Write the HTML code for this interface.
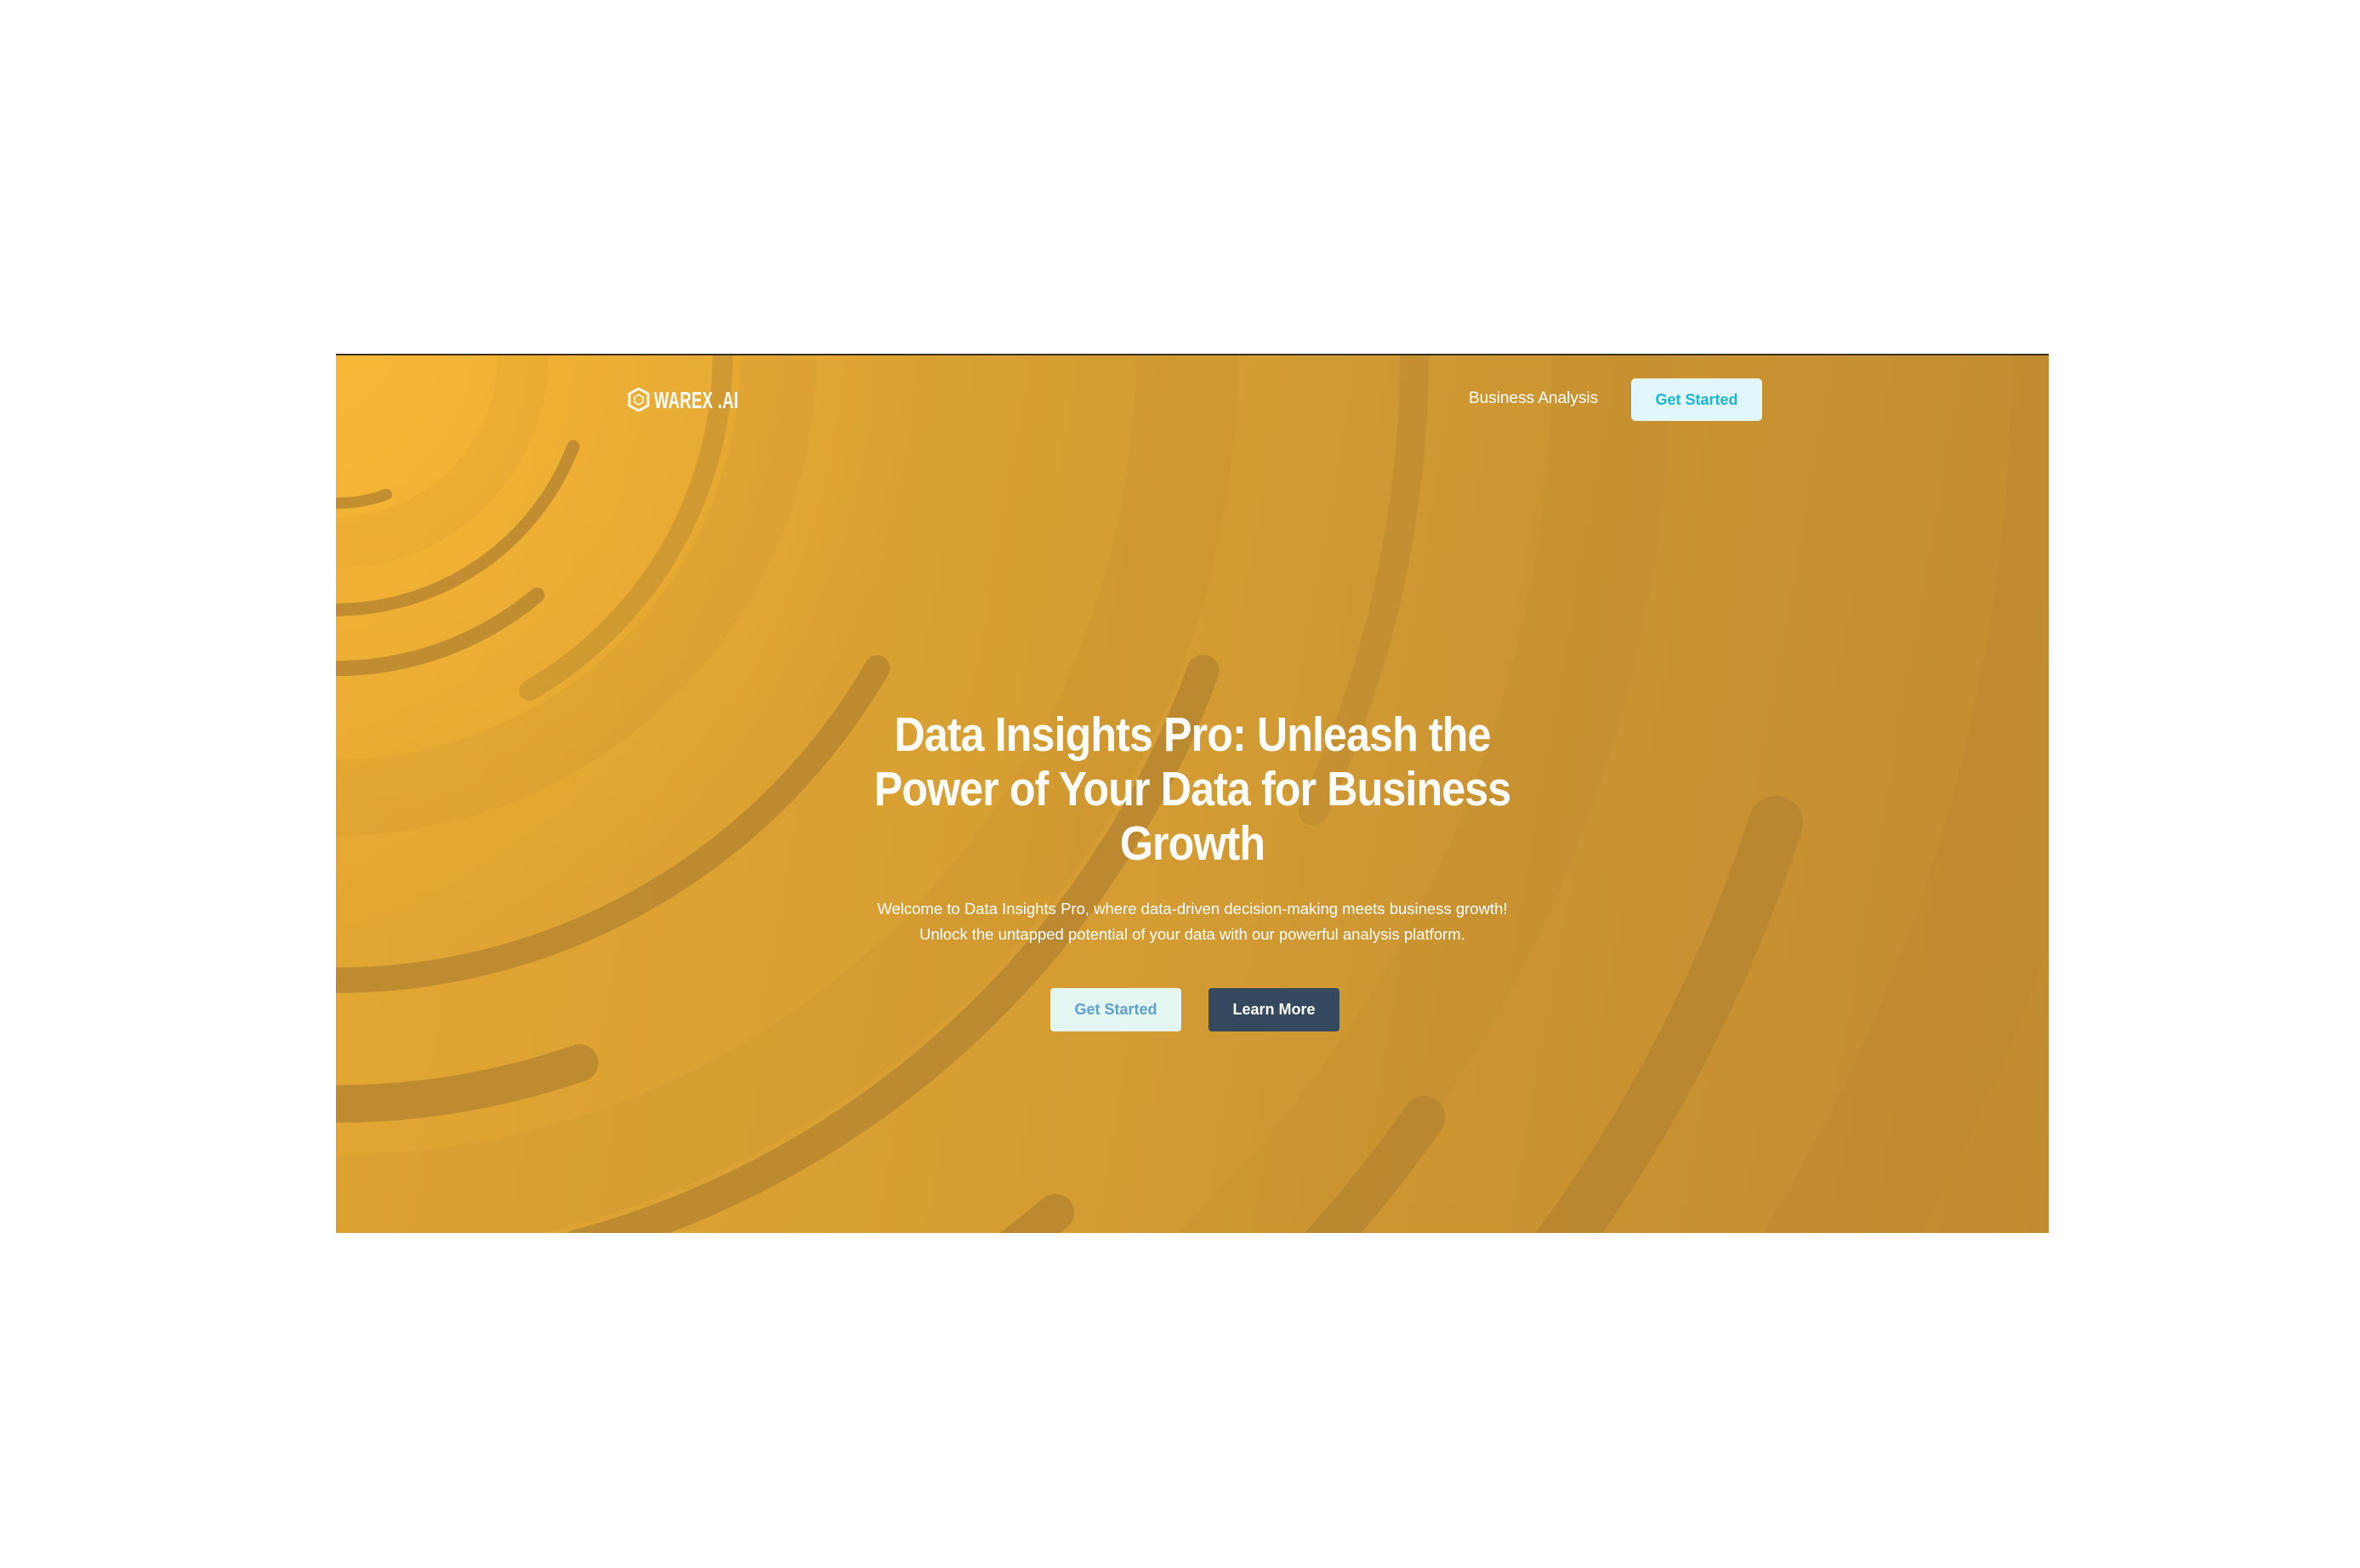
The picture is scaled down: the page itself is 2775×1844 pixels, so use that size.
<!DOCTYPE html>
<html><head><meta charset="utf-8">
<style>
html,body{margin:0;padding:0;background:#fff;width:2775px;height:1844px;overflow:hidden;font-family:"Liberation Sans",Arial,sans-serif;}
.hero{position:absolute;left:395px;top:416px;width:2014px;height:1034px;overflow:hidden;
background:linear-gradient(100deg,#e4a732 0%,#dca232 25%,#d39b32 50%,#c99231 75%,#c28b31 100%);border-top:2px solid #3a3020;box-sizing:border-box;}
.hero svg.bg{position:absolute;left:0;top:0}
.logo-i{position:absolute;left:343px;top:38px}
.logo-t{position:absolute;left:374px;top:37px;color:#fff;font-weight:bold;font-size:28px;letter-spacing:0.5px;transform:scaleX(0.66);transform-origin:left top;white-space:nowrap}
.nav{position:absolute;left:1332px;top:40px;color:#fff;font-size:19px}
.nbtn{position:absolute;left:1523px;top:27px;width:154px;height:50px;background:#e2f7fb;border-radius:5px;color:#1ab6d6;font-weight:bold;font-size:18px;display:flex;align-items:center;justify-content:center}
h1{position:absolute;left:0;width:2014px;top:414px;margin:0;text-align:center;color:#fff;font-size:57px;line-height:64px;font-weight:bold;letter-spacing:-1px}
h1 span{display:block;transform:scaleX(0.88);}
p{position:absolute;left:0;width:2014px;top:636px;margin:0;text-align:center;color:#fff;font-size:18.5px;line-height:30px}
.b1,.b2{position:absolute;top:744px;width:154px;height:51px;border-radius:4px;display:flex;align-items:center;justify-content:center;font-weight:bold;font-size:18px}
.b1{left:840px;background:#e3f6f1;color:#5fa0cc}
.b2{left:1026px;background:#34495e;color:#fff}
</style></head><body>
<div class="hero">
<svg class="bg" width="2014" height="1034" viewBox="0 0 2014 1034">
<defs><radialGradient id="g" cx="0" cy="0" r="700" gradientUnits="userSpaceOnUse">
<stop offset="0" stop-color="#fbba36" stop-opacity=".9"/><stop offset="1" stop-color="#fbba36" stop-opacity="0"/></radialGradient></defs>
<rect width="2014" height="1034" fill="url(#g)"/>
<g fill="none" stroke="#a8742a" stroke-opacity=".08">
<circle cx="0" cy="0" r="220" stroke-width="60"/>
<circle cx="0" cy="0" r="520" stroke-width="90"/>
<circle cx="0" cy="0" r="1000" stroke-width="120"/>
<circle cx="0" cy="0" r="1500" stroke-width="140"/>
<circle cx="0" cy="0" r="2050" stroke-width="160"/>
</g>
<g fill="none" stroke="#b5842f" stroke-opacity=".8" stroke-linecap="round">
<path d="M59.5 163.5 A174 174 0 0 1 -15 173" stroke-width="13"/>
<path d="M279 107 A299 299 0 0 1 -26 298" stroke-width="15"/>
<path d="M236.5 282 A368 368 0 0 1 -32 366.6" stroke-width="18"/>
<path d="M453 -40 A455 455 0 0 1 227.5 394" stroke-width="24" stroke-opacity=".45"/>
<path d="M636.5 367.5 A735 735 0 0 1 -64 732" stroke-width="30"/>
<path d="M286.5 832 A880 880 0 0 1 -77 877" stroke-width="44"/>
<path d="M1019.6 371 A1085 1085 0 0 1 280.8 1048" stroke-width="38"/>
<path d="M1263 -110 A1268 1268 0 0 1 1149 536" stroke-width="34" stroke-opacity=".45"/>
<path d="M1279.5 896 A1562 1562 0 0 1 896 1279.5" stroke-width="50"/>
<path d="M1693 550 A1780 1780 0 0 1 1258.6 1258.6" stroke-width="64"/>
<path d="M846 1008 A1316 1316 0 0 1 658 1140" stroke-width="44"/>
</g>
</svg>
<svg class="logo-i" width="26" height="28" viewBox="0 0 26 28"><path d="M13 1 L24 7 L24 21 L13 27 L2 21 L2 7 Z" fill="none" stroke="#fff" stroke-width="3" opacity=".9"/><path d="M13 8 L18 11 L18 17 L13 20 L8 17 L8 11Z" fill="#f0b040" stroke="#fff" stroke-width="1.5"/></svg>
<div class="logo-t">WAREX .AI</div>
<div class="nav">Business Analysis</div>
<div class="nbtn">Get Started</div>
<h1><span>Data Insights Pro: Unleash the</span><span>Power of Your Data for Business</span><span>Growth</span></h1>
<p>Welcome to Data Insights Pro, where data-driven decision-making meets business growth!<br>Unlock the untapped potential of your data with our powerful analysis platform.</p>
<div class="b1">Get Started</div>
<div class="b2">Learn More</div>
</div>
</body></html>
